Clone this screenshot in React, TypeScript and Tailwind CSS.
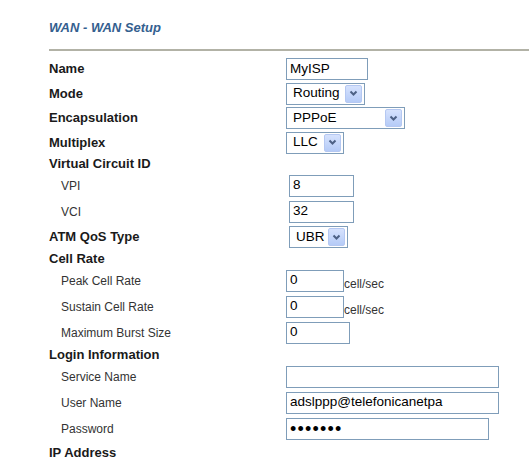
import React from "react";

const F = { fontFamily: '"Liberation Sans", Arial, sans-serif' };

function Arrow() {
  return (
    <div className="flex h-[18px] w-[17px] items-center justify-center rounded-[2px] border border-[#b5c8f2] bg-gradient-to-b from-[#d6e2fd] to-[#b5cbf7]">
      <svg width="9" height="7" viewBox="0 0 9 7">
        <path d="M1.5 1.5 L4.5 4.5 L7.5 1.5" fill="none" stroke="#4d6185" strokeWidth="2" />
      </svg>
    </div>
  );
}

function Select({ value, w, ml = "" }: { value: string; w: string; ml?: string }) {
  return (
    <div className={`flex h-[22px] items-center justify-between border border-[#7f9db9] bg-white pl-[6px] pr-[2px] text-[13.5px] text-black ${w} ${ml}`}>
      <span>{value}</span>
      <Arrow />
    </div>
  );
}

function Input({ value, w, ml = "", h = "h-[22px]" }: { value?: string; w: string; ml?: string; h?: string }) {
  return (
    <div className={`flex items-center border border-[#7f9db9] bg-white pl-[3px] text-[13.5px] text-black ${w} ${h} ${ml}`}>
      {value}
    </div>
  );
}

function Row({ h, label, sub, children }: { h: string; label: string; sub?: boolean; children?: React.ReactNode }) {
  return (
    <div className={`flex items-center ${h}`}>
      <div
        className={
          sub
            ? "w-[237px] pl-[12px] text-[12px] text-[#333]"
            : "w-[237px] text-[13px] font-bold text-[#1a1a1a]"
        }
      >
        {label}
      </div>
      {children}
    </div>
  );
}

export default function App() {
  return (
    <div className="h-[464px] w-[529px] overflow-hidden bg-white" style={F}>
      <div className="pl-[49px] pt-[18px]">
        <div className="text-[13px] font-bold italic text-[#34608f]">WAN - WAN Setup</div>
        <div className="mt-[11px] h-[2px] bg-[#b2b2a6]" />
        <div className="mt-[6px]">
          <Row h="h-[25px]" label="Name">
            <Input value="MyISP" w="w-[82px]" />
          </Row>
          <Row h="h-[24px]" label="Mode">
            <Select value="Routing" w="w-[79px]" />
          </Row>
          <Row h="h-[25px]" label="Encapsulation">
            <Select value="PPPoE" w="w-[119px]" />
          </Row>
          <Row h="h-[24px]" label="Multiplex">
            <Select value="LLC" w="w-[58px]" />
          </Row>
          <Row h="h-[18px]" label="Virtual Circuit ID" />
          <Row h="h-[26px]" label="VPI" sub>
            <Input value="8" w="w-[65px]" ml="ml-[3px]" />
          </Row>
          <Row h="h-[26px]" label="VCI" sub>
            <Input value="32" w="w-[65px]" ml="ml-[3px]" />
          </Row>
          <Row h="h-[25px]" label="ATM QoS Type">
            <Select value="UBR" w="w-[59px]" ml="ml-[3px]" />
          </Row>
          <Row h="h-[18px]" label="Cell Rate" />
          <Row h="h-[26px]" label="Peak Cell Rate" sub>
            <Input value="0" w="w-[58px]" />
            <span className="mt-[6px] text-[12px] text-[#333]">cell/sec</span>
          </Row>
          <Row h="h-[26px]" label="Sustain Cell Rate" sub>
            <Input value="0" w="w-[58px]" />
            <span className="mt-[6px] text-[12px] text-[#333]">cell/sec</span>
          </Row>
          <Row h="h-[26px]" label="Maximum Burst Size" sub>
            <Input value="0" w="w-[64px]" />
          </Row>
          <Row h="h-[19px]" label="Login Information" />
          <Row h="h-[25px]" label="Service Name" sub>
            <Input value="" w="w-[213px]" />
          </Row>
          <Row h="h-[26px]" label="User Name" sub>
            <Input value="adslppp@telefonicanetpa" w="w-[213px]" />
          </Row>
          <Row h="h-[27px]" label="Password" sub>
            <div className="flex h-[22px] w-[203px] items-center overflow-hidden border border-[#7f9db9] bg-white pl-[3px] text-[18px] leading-none tracking-[1.2px] text-black">
              •••••••
            </div>
          </Row>
          <Row h="h-[20px]" label="IP Address" />
        </div>
      </div>
    </div>
  );
}
